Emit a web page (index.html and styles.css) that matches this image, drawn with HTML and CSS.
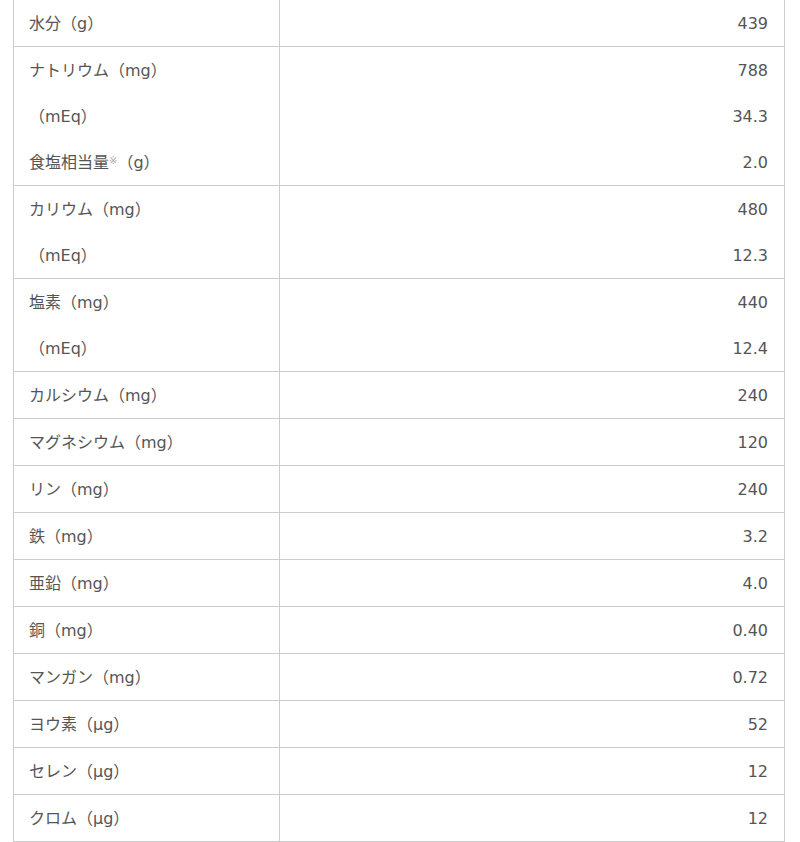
FILE: index.html
```html
<!DOCTYPE html>
<html lang="ja">
<head>
<meta charset="utf-8">
<link rel="stylesheet" href="styles.css">
</head>
<body>
<table class="nutri">
<tbody>
<tr><td class="name"><div class="ln">水分（g）</div></td><td class="val"><div class="ln">439</div></td></tr>
<tr><td class="name"><div class="ln">ナトリウム（mg）</div><div class="ln">（mEq）</div><div class="ln">食塩相当量<span class="note">※</span>（g）</div></td><td class="val"><div class="ln">788</div><div class="ln">34.3</div><div class="ln">2.0</div></td></tr>
<tr><td class="name"><div class="ln">カリウム（mg）</div><div class="ln">（mEq）</div></td><td class="val"><div class="ln">480</div><div class="ln">12.3</div></td></tr>
<tr><td class="name"><div class="ln">塩素（mg）</div><div class="ln">（mEq）</div></td><td class="val"><div class="ln">440</div><div class="ln">12.4</div></td></tr>
<tr><td class="name"><div class="ln">カルシウム（mg）</div></td><td class="val"><div class="ln">240</div></td></tr>
<tr><td class="name"><div class="ln">マグネシウム（mg）</div></td><td class="val"><div class="ln">120</div></td></tr>
<tr><td class="name"><div class="ln">リン（mg）</div></td><td class="val"><div class="ln">240</div></td></tr>
<tr><td class="name"><div class="ln">鉄（mg）</div></td><td class="val"><div class="ln">3.2</div></td></tr>
<tr><td class="name"><div class="ln">亜鉛（mg）</div></td><td class="val"><div class="ln">4.0</div></td></tr>
<tr><td class="name"><div class="ln">銅（mg）</div></td><td class="val"><div class="ln">0.40</div></td></tr>
<tr><td class="name"><div class="ln">マンガン（mg）</div></td><td class="val"><div class="ln">0.72</div></td></tr>
<tr><td class="name"><div class="ln">ヨウ素（μg）</div></td><td class="val"><div class="ln">52</div></td></tr>
<tr><td class="name"><div class="ln">セレン（μg）</div></td><td class="val"><div class="ln">12</div></td></tr>
<tr><td class="name"><div class="ln">クロム（μg）</div></td><td class="val"><div class="ln">12</div></td></tr>
</tbody>
</table>
</body>
</html>
```
FILE: styles.css
```css
html, body {
  margin: 0;
  padding: 0;
  background: #fff;
}
body {
  padding-left: 13px;
  font-family: "DejaVu Sans", "Noto Sans CJK JP", sans-serif;
  font-size: 16px;
  color: #555;
}
.nutri {
  border-collapse: collapse;
  width: 772px;
  table-layout: fixed;
}
.nutri td {
  border: 1px solid #ccc;
  padding: 0 15px;
  vertical-align: top;
}
.nutri tr:first-child td {
  border-top: none;
}
.nutri td.name {
  width: 235px;
}
.nutri td.val {
  text-align: right;
  padding-right: 16px;
}
.ln {
  height: 46px;
  line-height: 47px;
  white-space: nowrap;
}
.note {
  font-size: 10px;
  color: #aaa;
  vertical-align: 4px;
  line-height: 0;
}
```
